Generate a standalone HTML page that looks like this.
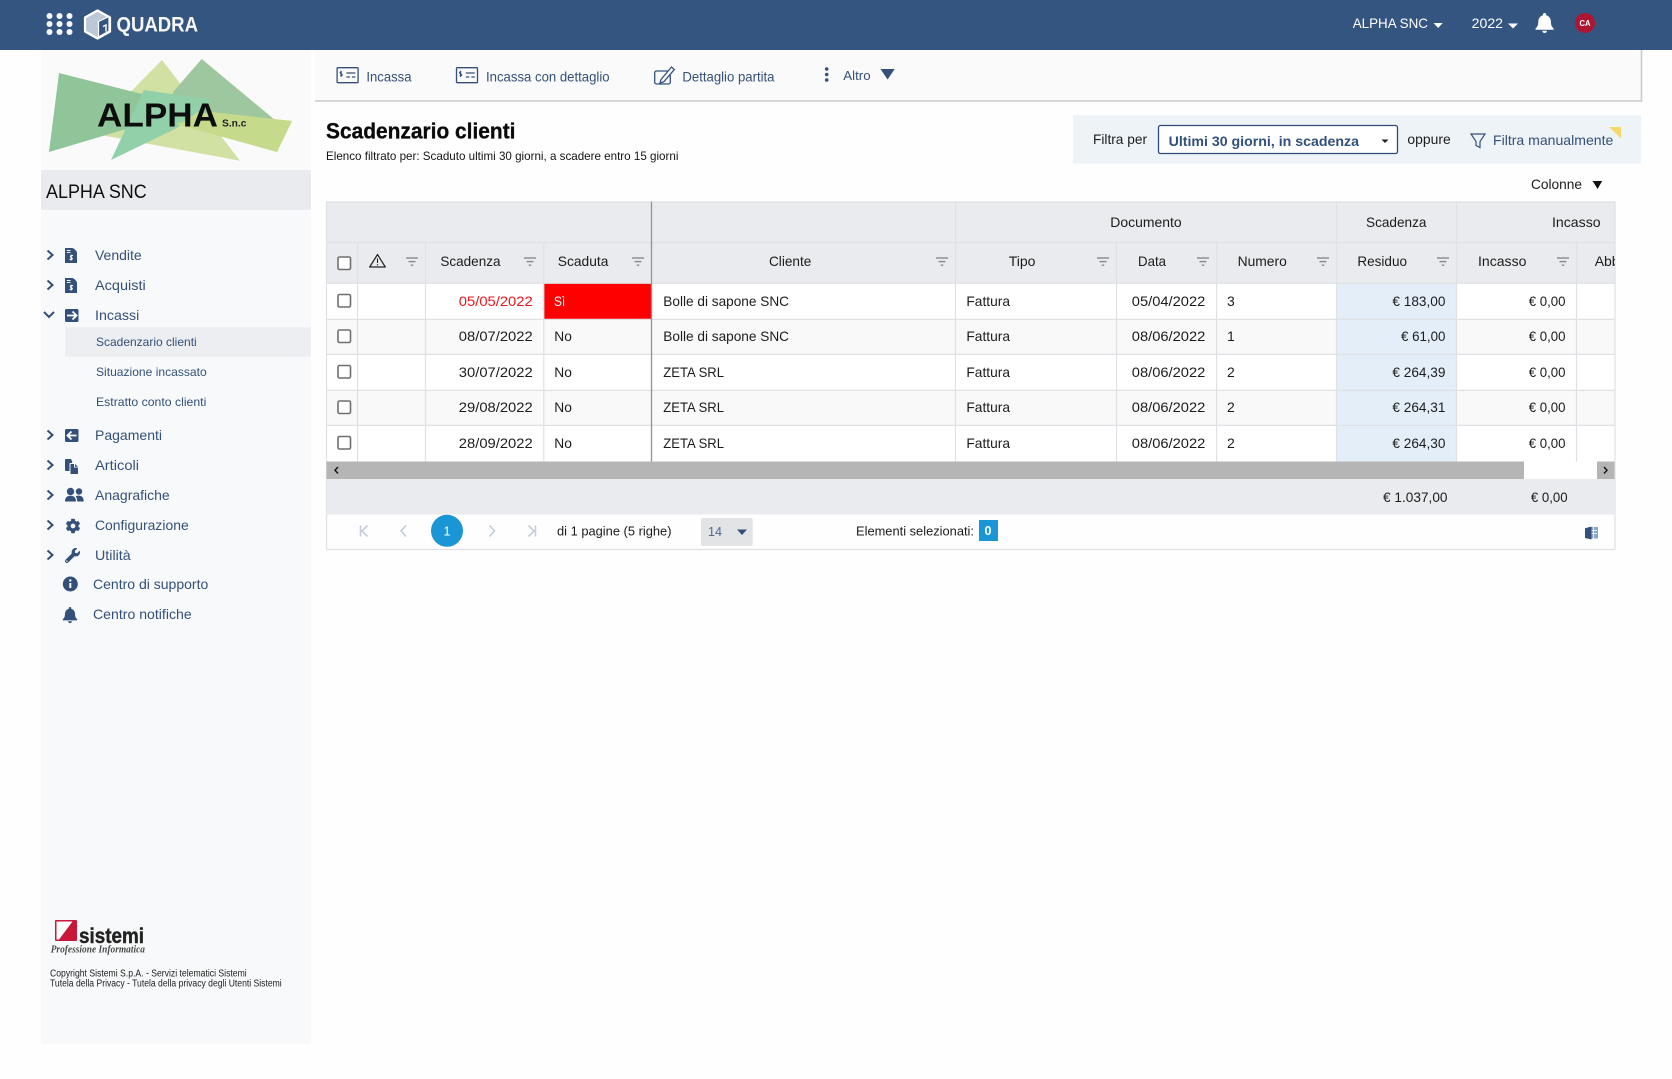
<!DOCTYPE html>
<html lang="it">
<head>
<meta charset="utf-8">
<title>Scadenzario clienti</title>
<style>
html,body{margin:0;padding:0;background:#fefefe;width:1672px;height:1079px;overflow:hidden}
svg{display:block}
text{font-family:"Liberation Sans",sans-serif;font-size:14px;fill:#1c1c1c}
.n text,text.n{fill:#34507a}
.s{font-size:12px}
.b{font-weight:bold}
.w{fill:#fff}
.g line{stroke:#dfe1e4;stroke-width:1.2}
.cb{fill:#fff;stroke:#6f6f6f;stroke-width:1.6}
</style>
</head>
<body>
<svg width="1672" height="1079" viewBox="0 0 1672 1079" xmlns="http://www.w3.org/2000/svg">
<defs>
<g id="f"><path d="M0 0H12" stroke="#85898e" stroke-width="1.4"/><path d="M2.5 3.6H9.5" stroke="#85898e" stroke-width="1.4"/><path d="M4.8 7.2H7.2" stroke="#85898e" stroke-width="1.4"/></g>
<g id="bill"><rect x=".7" y=".7" width="21" height="15" rx="1" fill="none" stroke="#34507a" stroke-width="1.3"/><path d="M5.5 5c-1.8-.8-2.6 1.4-.8 1.8 2.2.5 1.2 2.8-.9 1.8M4.7 3.800v6.200" fill="none" stroke="#34507a" stroke-width="1"/><path d="M10 6H19M10 10H13.500M15.500 10H19" stroke="#34507a" stroke-width="1.3"/></g>
<g id="chev"><path d="M0 0L5 4.500L0 9" fill="none" stroke="#34507a" stroke-width="2"/></g>
<g id="doc"><path d="M0 0H7.500L12 4.500V15H0Z" fill="#34507a"/><path d="M8.300 0L12 3.700H8.300Z" fill="#34507a"/><path d="M1.800 2.500H5.500M1.800 4.600H5.500" stroke="#fff" stroke-width=".9"/><path d="M8 7.800c-1.900-1-3.800.7-1.900 1.700 2.300 1 .9 2.800-1.500 1.700M6.200 6.800v5.700" fill="none" stroke="#fff" stroke-width="1.100"/></g>
</defs>

<rect width="1672" height="1079" fill="#fefefe"/>

<!-- Top bar -->
<rect width="1672" height="50" fill="#355581"/>
<g fill="#f4f6f9">
<circle cx="49.500" cy="16" r="3"/><circle cx="59.500" cy="16" r="3"/><circle cx="69.500" cy="16" r="3"/>
<circle cx="49.500" cy="24" r="3"/><circle cx="59.500" cy="24" r="3"/><circle cx="69.500" cy="24" r="3"/>
<circle cx="49.500" cy="32" r="3"/><circle cx="59.500" cy="32" r="3"/><circle cx="69.500" cy="32" r="3"/>
</g>
<path d="M97.500 10.500L110 17.500V31.500L97.500 38.500L85 31.500V17.500Z" fill="#bcc7d8" stroke="#fff" stroke-width="2.200" stroke-linejoin="round"/>
<path d="M98.500 21.500L109 16.500V31L98.500 37Z" fill="#355581" stroke="#fff" stroke-width="1.200"/>
<path d="M103 26.500L106 25V31.500" fill="none" stroke="#fff" stroke-width="1.400"/>
<text x="116.500" y="31.500" class="w" style="font-size:21px;font-weight:bold;opacity:.96" textLength="81.500" lengthAdjust="spacingAndGlyphs">QUADRA</text>
<text x="1352.700" y="28" class="w" textLength="75.300" lengthAdjust="spacingAndGlyphs">ALPHA SNC</text>
<path d="M1433.600 23H1442.700L1438.100 28Z" fill="#fff"/>
<text x="1471.700" y="28" class="w" textLength="31.300" lengthAdjust="spacingAndGlyphs">2022</text>
<path d="M1508 23.500H1518L1513 28.500Z" fill="#fff"/>
<path transform="translate(1535.600 13)" fill="#fff" d="M9 0a1.600 1.600 0 0 1 1.600 1.600v.7c3 .8 4.700 3.400 4.700 6.500 0 4 1.200 5.200 2.700 6.600v1.300H0v-1.300c1.500-1.400 2.700-2.600 2.700-6.600 0-3.100 1.700-5.700 4.700-6.500v-.7A1.600 1.600 0 0 1 9 0zM6.700 17.800h4.600a2.300 2.300 0 0 1-4.600 0z"/>
<circle cx="1585" cy="23" r="10" fill="#ad1632"/>
<text x="1579.500" y="26" class="w b" style="font-size:8px" textLength="11" lengthAdjust="spacingAndGlyphs">CA</text>

<!-- Sidebar -->
<rect x="41" y="50" width="270" height="994" fill="#f8f9fa"/>
<rect x="41" y="50" width="270" height="120" fill="#fafafa"/>
<g>
<polygon points="162,60 240,160.700 90,133" fill="#d0e1a3"/>
<polygon points="201.700,59 275,120 172,120 173,92" fill="#9fc79f"/>
<polygon points="59,73 49,152 180,113 146,95" fill="#90c59a"/>
<polygon points="292,121 277,152 135,112 170,110" fill="#c9dc92"/>
<polygon points="144,90 111,160 177,128 213,100" fill="#92d0a9"/>
<polygon points="292,121 277,152 176,124 212,112" fill="#c6da8c"/>
</g>
<text x="97" y="126.500" class="b" style="font-size:33px;fill:#0d0d0d" textLength="121" lengthAdjust="spacingAndGlyphs">ALPHA</text>
<text x="222" y="126.500" class="b" style="font-size:10px;fill:#222" textLength="24.500" lengthAdjust="spacingAndGlyphs">S.n.c</text>
<rect x="41" y="170" width="270" height="40" fill="#e9ebee"/>
<text x="46" y="198" style="font-size:19px;fill:#0f0f0f" textLength="100.700" lengthAdjust="spacingAndGlyphs">ALPHA SNC</text>

<rect x="65" y="327.300" width="246" height="29.500" fill="#eceef1"/>

<use href="#chev" x="47.500" y="250.500"/><use href="#chev" x="47.500" y="280.500"/>
<path d="M44 312L49 317L54 312" fill="none" stroke="#34507a" stroke-width="2"/>
<use href="#chev" x="47.500" y="430.500"/><use href="#chev" x="47.500" y="460.500"/><use href="#chev" x="47.500" y="490.500"/><use href="#chev" x="47.500" y="520.500"/><use href="#chev" x="47.500" y="550.500"/>

<use href="#doc" x="65" y="248"/><use href="#doc" x="65" y="278"/>
<rect x="65" y="309" width="13.500" height="13" rx="1.500" fill="#34507a"/><path d="M67 315.500H76M72.500 311.500L76.500 315.500L72.500 319.500" fill="none" stroke="#fff" stroke-width="1.800"/>
<rect x="65" y="429" width="13.500" height="13" rx="1.500" fill="#34507a"/><path d="M76.500 435.500H67.500M71.500 431.500L67.500 435.500L71.500 439.500" fill="none" stroke="#fff" stroke-width="1.800"/>
<path d="M65 460a1 1 0 0 1 1-1h5l1.200 2.500V463H69.500v8H66a1 1 0 0 1-1-1z" fill="#34507a"/>
<path d="M70.500 464h3.500v3.500h4V474h-7.500zM75 464l3 2.700h-3z" fill="#34507a"/>
<g fill="#34507a"><circle cx="70.500" cy="491.500" r="3.700"/><circle cx="79" cy="491.500" r="3.200"/><path d="M65 501.500c0-4 2-5.800 5.500-5.800s5.500 1.800 5.500 5.800zM77.200 501.500c0-2.500-.5-4-1.500-5.300.9-.5 2-.6 3-.6 3 0 5 1.600 5 5.900z"/></g>
<path transform="translate(65.500 518.500) scale(.0293)" fill="#34507a" d="M487.400 315.700l-42.600-24.600c4.300-23.200 4.300-47 0-70.200l42.600-24.600c4.900-2.800 7.100-8.600 5.500-14-11.100-35.600-30-67.800-54.700-94.600-3.800-4.100-10-5.100-14.800-2.300L380.800 110c-17.900-15.400-38.500-27.300-60.800-35.100V25.800c0-5.600-3.900-10.500-9.400-11.700-36.700-8.200-74.300-7.800-109.200 0-5.500 1.200-9.400 6.100-9.400 11.700V75c-22.200 7.900-42.800 19.800-60.800 35.100L88.700 85.500c-4.900-2.800-11-1.900-14.800 2.300-24.700 26.700-43.600 58.900-54.700 94.600-1.700 5.400.6 11.200 5.500 14L67.300 221c-4.300 23.200-4.300 47 0 70.200l-42.600 24.600c-4.900 2.800-7.100 8.600-5.500 14 11.100 35.600 30 67.800 54.700 94.600 3.800 4.100 10 5.100 14.800 2.300l42.600-24.600c17.900 15.400 38.500 27.300 60.800 35.100v49.200c0 5.600 3.900 10.500 9.400 11.700 36.700 8.200 74.300 7.800 109.200 0 5.500-1.200 9.400-6.100 9.400-11.700v-49.200c22.200-7.900 42.800-19.800 60.800-35.100l42.600 24.600c4.900 2.800 11 1.900 14.800-2.300 24.700-26.700 43.600-58.900 54.700-94.600 1.500-5.500-.7-11.300-5.600-14.100zM256 336c-44.100 0-80-35.900-80-80s35.900-80 80-80 80 35.900 80 80-35.900 80-80 80z"/>
<path transform="translate(65 548) scale(.0293)" fill="#34507a" d="M507.730 109.100c-2.240-9.030-13.540-12.090-20.120-5.510l-74.360 74.360-67.880-11.310-11.310-67.880 74.360-74.360c6.620-6.620 3.430-17.900-5.660-20.160-47.380-11.740-99.550.91-136.580 37.930-39.640 39.640-50.550 97.100-34.050 147.200L18.740 402.760c-24.990 24.990-24.990 65.510 0 90.500 24.990 24.990 65.510 24.990 90.500 0l213.210-213.210c50.120 16.710 107.470 5.680 147.370-34.220 37.070-37.070 49.700-89.320 37.910-136.730zM64 472c-13.250 0-24-10.750-24-24 0-13.260 10.750-24 24-24s24 10.740 24 24c0 13.250-10.750 24-24 24z"/>
<circle cx="70.300" cy="584" r="7.500" fill="#34507a"/><rect x="69.300" y="583" width="2" height="5" fill="#fff"/><circle cx="70.300" cy="580.500" r="1.200" fill="#fff"/>
<path transform="translate(62.800 607) scale(.8)" fill="#34507a" d="M9 0a1.600 1.600 0 0 1 1.600 1.600v.7c3 .8 4.700 3.400 4.700 6.500 0 4 1.200 5.200 2.700 6.600v1.300H0v-1.300c1.500-1.400 2.700-2.600 2.700-6.600 0-3.100 1.700-5.700 4.700-6.500v-.7A1.600 1.600 0 0 1 9 0zM6.700 17.800h4.600a2.300 2.300 0 0 1-4.600 0z"/>

<g class="n">
<text x="95" y="260" textLength="46.700" lengthAdjust="spacingAndGlyphs">Vendite</text>
<text x="95" y="290" textLength="50.700" lengthAdjust="spacingAndGlyphs">Acquisti</text>
<text x="95" y="320" textLength="44.300" lengthAdjust="spacingAndGlyphs">Incassi</text>
<text x="96" y="346" class="s" textLength="100.700" lengthAdjust="spacingAndGlyphs">Scadenzario clienti</text>
<text x="96" y="376" class="s" textLength="110.700" lengthAdjust="spacingAndGlyphs">Situazione incassato</text>
<text x="96" y="406" class="s" textLength="110.300" lengthAdjust="spacingAndGlyphs">Estratto conto clienti</text>
<text x="95" y="440" textLength="67" lengthAdjust="spacingAndGlyphs">Pagamenti</text>
<text x="95" y="470" textLength="44" lengthAdjust="spacingAndGlyphs">Articoli</text>
<text x="95" y="500" textLength="74.700" lengthAdjust="spacingAndGlyphs">Anagrafiche</text>
<text x="95" y="530" textLength="93.700" lengthAdjust="spacingAndGlyphs">Configurazione</text>
<text x="95" y="560" textLength="35.700" lengthAdjust="spacingAndGlyphs">Utilità</text>
<text x="93" y="589" textLength="115.300" lengthAdjust="spacingAndGlyphs">Centro di supporto</text>
<text x="93" y="619" textLength="98.700" lengthAdjust="spacingAndGlyphs">Centro notifiche</text>
</g>

<!-- Sistemi logo -->
<rect x="55" y="920" width="22" height="21" rx="1" fill="#c8183a"/>
<path d="M56.500 921.500H72.500L59 939.500H56.500Z" fill="#fff"/>
<text x="79" y="943" class="b" style="font-size:21px;fill:#222;stroke:#222;stroke-width:.4" textLength="65" lengthAdjust="spacingAndGlyphs">sistemi</text>
<text x="50.700" y="952.500" style="font-family:'Liberation Serif',serif;font-size:10.500px;font-style:italic;font-weight:bold;fill:#4a4a4a" textLength="94.300" lengthAdjust="spacingAndGlyphs">Professione Informatica</text>
<text x="50" y="976.500" style="font-size:10px;fill:#1c1c1c" textLength="196.700" lengthAdjust="spacingAndGlyphs">Copyright Sistemi S.p.A. - Servizi telematici Sistemi</text>
<text x="50" y="986.500" style="font-size:10px;fill:#1c1c1c" textLength="231.700" lengthAdjust="spacingAndGlyphs">Tutela della Privacy - Tutela della privacy degli Utenti Sistemi</text>

<!-- Toolbar -->
<rect x="315" y="50" width="1326" height="51" fill="#fafafa"/>
<path d="M315 101H1641.500V50" fill="none" stroke="#c9cacc" stroke-width="1.600"/>
<use href="#bill" x="336.400" y="67"/>
<text class="n" x="366.400" y="81.500" textLength="45.100" lengthAdjust="spacingAndGlyphs">Incassa</text>
<use href="#bill" x="455.800" y="67"/>
<text class="n" x="486" y="81.500" textLength="123.600" lengthAdjust="spacingAndGlyphs">Incassa con dettaglio</text>
<path d="M668 71H656.500a1.800 1.800 0 0 0-1.800 1.800V82.200a1.800 1.800 0 0 0 1.800 1.800H668.500a1.800 1.800 0 0 0 1.800-1.800V75" fill="none" stroke="#34507a" stroke-width="1.300"/>
<path d="M661 79.500L671.500 67L674.300 69.500L663.800 81.800L660 83Z" fill="#fafafa" stroke="#34507a" stroke-width="1.300"/>
<text class="n" x="682.400" y="81.500" textLength="92.100" lengthAdjust="spacingAndGlyphs">Dettaglio partita</text>
<g fill="#34507a"><circle cx="826.700" cy="69" r="1.800"/><circle cx="826.700" cy="74.500" r="1.800"/><circle cx="826.700" cy="80" r="1.800"/></g>
<text class="n" x="843.300" y="80" style="font-size:13px" textLength="27.300" lengthAdjust="spacingAndGlyphs">Altro</text>
<path d="M880.500 69H894.700L887.600 79.500Z" fill="#34507a"/>

<!-- Title -->
<text x="326" y="138.500" class="b" style="font-size:22px;fill:#0a0a0a;stroke:#0a0a0a;stroke-width:.3" textLength="189.500" lengthAdjust="spacingAndGlyphs">Scadenzario clienti</text>
<text x="326" y="160" style="font-size:12px;fill:#141414" textLength="352.400" lengthAdjust="spacingAndGlyphs">Elenco filtrato per: Scaduto ultimi 30 giorni, a scadere entro 15 giorni</text>

<!-- Filter -->
<rect x="1073" y="115" width="568" height="48.500" fill="#eef3f8"/>
<text x="1093" y="144" textLength="54" lengthAdjust="spacingAndGlyphs">Filtra per</text>
<rect x="1158.500" y="125.500" width="239" height="28" rx="2" fill="#fff" stroke="#2f4b77" stroke-width="1.300"/>
<text x="1168.600" y="146" class="b" style="fill:#2f4f7e" textLength="190.400" lengthAdjust="spacingAndGlyphs">Ultimi 30 giorni, in scadenza</text>
<path d="M1381.500 139.500H1388.500L1385 143Z" fill="#222"/>
<text x="1407.400" y="144" textLength="43.300" lengthAdjust="spacingAndGlyphs">oppure</text>
<path d="M1471 134H1485L1480 141.500V147.500L1476 145.500V141.500Z" fill="none" stroke="#34507a" stroke-width="1.200"/>
<text class="n" x="1493" y="145" textLength="120.300" lengthAdjust="spacingAndGlyphs">Filtra manualmente</text>
<path d="M1609 127H1621V138.500Z" fill="#f5d96b"/>
<text x="1531" y="189" textLength="51" lengthAdjust="spacingAndGlyphs">Colonne</text>
<path d="M1592.700 181H1602.200L1597.500 189Z" fill="#111"/>

<!-- Table -->
<rect x="326.500" y="201.500" width="1288.500" height="81.500" fill="#e9ebee"/>
<rect x="326.500" y="283.500" width="1288.500" height="178" fill="#fff"/>
<rect x="326.500" y="319.500" width="1288.500" height="35" fill="#f9f9f9"/>
<rect x="326.500" y="390.500" width="1288.500" height="35" fill="#f9f9f9"/>
<rect x="1336.500" y="283.500" width="120" height="178" fill="#e3eef8"/>
<rect x="544" y="283.500" width="107.500" height="35.500" fill="#fe0000"/>
<g class="g">
<line x1="326.500" y1="202" x2="1615" y2="202"/>
<line x1="326.500" y1="242.500" x2="1615" y2="242.500"/>
<line x1="326.500" y1="283.300" x2="1615" y2="283.300"/>
<line x1="326.500" y1="319.400" x2="1615" y2="319.400"/>
<line x1="326.500" y1="354.400" x2="1615" y2="354.400"/>
<line x1="326.500" y1="390.400" x2="1615" y2="390.400"/>
<line x1="326.500" y1="425.400" x2="1615" y2="425.400"/>
<line x1="326.500" y1="201.500" x2="326.500" y2="549.500"/>
<line x1="1615" y1="201.500" x2="1615" y2="549.500"/>
<line x1="357.500" y1="242.500" x2="357.500" y2="461.500"/>
<line x1="425.500" y1="242.500" x2="425.500" y2="461.500"/>
<line x1="543.800" y1="242.500" x2="543.800" y2="461.500"/>
<line x1="955.500" y1="201.500" x2="955.500" y2="461.500"/>
<line x1="1116.500" y1="242.500" x2="1116.500" y2="461.500"/>
<line x1="1216.600" y1="242.500" x2="1216.600" y2="461.500"/>
<line x1="1336.500" y1="201.500" x2="1336.500" y2="461.500"/>
<line x1="1456.500" y1="201.500" x2="1456.500" y2="461.500"/>
<line x1="1576.500" y1="242.500" x2="1576.500" y2="461.500"/>
</g>
<line x1="651.500" y1="201.500" x2="651.500" y2="461.500" stroke="#909294" stroke-width="1.300"/>

<!-- Group headers -->
<text x="1110.300" y="227" textLength="71.400" lengthAdjust="spacingAndGlyphs">Documento</text>
<text x="1366" y="227" textLength="60.500" lengthAdjust="spacingAndGlyphs">Scadenza</text>
<text x="1552" y="227" textLength="48.600" lengthAdjust="spacingAndGlyphs">Incasso</text>

<!-- Column headers -->
<rect x="338" y="257" width="12.500" height="12.500" rx="1.500" class="cb"/>
<path d="M377.500 254.500L385.300 267H369.700Z" fill="none" stroke="#222" stroke-width="1.200" stroke-linejoin="round"/>
<path d="M377.500 258.500V263M377.500 264.300V265.500" stroke="#222" stroke-width="1.100"/>
<use href="#f" x="406" y="258"/>
<text x="440.400" y="266" textLength="60.100" lengthAdjust="spacingAndGlyphs">Scadenza</text>
<use href="#f" x="524" y="258"/>
<text x="557.800" y="266" textLength="50.600" lengthAdjust="spacingAndGlyphs">Scaduta</text>
<use href="#f" x="632" y="258"/>
<text x="769" y="266" textLength="42.300" lengthAdjust="spacingAndGlyphs">Cliente</text>
<use href="#f" x="936" y="258"/>
<text x="1008.700" y="266" textLength="26.700" lengthAdjust="spacingAndGlyphs">Tipo</text>
<use href="#f" x="1097" y="258"/>
<text x="1138" y="266" textLength="28" lengthAdjust="spacingAndGlyphs">Data</text>
<use href="#f" x="1197" y="258"/>
<text x="1237.600" y="266" textLength="49.200" lengthAdjust="spacingAndGlyphs">Numero</text>
<use href="#f" x="1317" y="258"/>
<text x="1357.400" y="266" textLength="49.600" lengthAdjust="spacingAndGlyphs">Residuo</text>
<use href="#f" x="1437" y="258"/>
<text x="1478" y="266" textLength="48.400" lengthAdjust="spacingAndGlyphs">Incasso</text>
<use href="#f" x="1557" y="258"/>
<svg x="1576.500" y="250" width="38.500" height="24"><text x="18.200" y="16">Abb</text></svg>

<!-- Rows -->
<g>
<rect x="338" y="294.500" width="12.500" height="12.500" rx="1.500" class="cb"/>
<rect x="338" y="330" width="12.500" height="12.500" rx="1.500" class="cb"/>
<rect x="338" y="365.500" width="12.500" height="12.500" rx="1.500" class="cb"/>
<rect x="338" y="401" width="12.500" height="12.500" rx="1.500" class="cb"/>
<rect x="338" y="436.500" width="12.500" height="12.500" rx="1.500" class="cb"/>
</g>
<text x="458.800" y="306" style="fill:#e8181c" textLength="73.900" lengthAdjust="spacingAndGlyphs">05/05/2022</text>
<text x="458.800" y="341" textLength="73.900" lengthAdjust="spacingAndGlyphs">08/07/2022</text>
<text x="458.800" y="377" textLength="73.900" lengthAdjust="spacingAndGlyphs">30/07/2022</text>
<text x="458.800" y="412" textLength="73.900" lengthAdjust="spacingAndGlyphs">29/08/2022</text>
<text x="458.800" y="448" textLength="73.900" lengthAdjust="spacingAndGlyphs">28/09/2022</text>

<text x="553.900" y="306" class="w" textLength="11.400" lengthAdjust="spacingAndGlyphs">Sì</text>
<text x="554.300" y="341" textLength="17.600" lengthAdjust="spacingAndGlyphs">No</text>
<text x="554.300" y="377" textLength="17.600" lengthAdjust="spacingAndGlyphs">No</text>
<text x="554.300" y="412" textLength="17.600" lengthAdjust="spacingAndGlyphs">No</text>
<text x="554.300" y="448" textLength="17.600" lengthAdjust="spacingAndGlyphs">No</text>

<text x="663.300" y="306" textLength="125.700" lengthAdjust="spacingAndGlyphs">Bolle di sapone SNC</text>
<text x="663.300" y="341" textLength="125.700" lengthAdjust="spacingAndGlyphs">Bolle di sapone SNC</text>
<text x="663.300" y="377" textLength="60.700" lengthAdjust="spacingAndGlyphs">ZETA SRL</text>
<text x="663.300" y="412" textLength="60.700" lengthAdjust="spacingAndGlyphs">ZETA SRL</text>
<text x="663.300" y="448" textLength="60.700" lengthAdjust="spacingAndGlyphs">ZETA SRL</text>

<text x="966.400" y="306" textLength="43.600" lengthAdjust="spacingAndGlyphs">Fattura</text>
<text x="966.400" y="341" textLength="43.600" lengthAdjust="spacingAndGlyphs">Fattura</text>
<text x="966.400" y="377" textLength="43.600" lengthAdjust="spacingAndGlyphs">Fattura</text>
<text x="966.400" y="412" textLength="43.600" lengthAdjust="spacingAndGlyphs">Fattura</text>
<text x="966.400" y="448" textLength="43.600" lengthAdjust="spacingAndGlyphs">Fattura</text>

<text x="1131.800" y="306" textLength="73.500" lengthAdjust="spacingAndGlyphs">05/04/2022</text>
<text x="1131.800" y="341" textLength="73.500" lengthAdjust="spacingAndGlyphs">08/06/2022</text>
<text x="1131.800" y="377" textLength="73.500" lengthAdjust="spacingAndGlyphs">08/06/2022</text>
<text x="1131.800" y="412" textLength="73.500" lengthAdjust="spacingAndGlyphs">08/06/2022</text>
<text x="1131.800" y="448" textLength="73.500" lengthAdjust="spacingAndGlyphs">08/06/2022</text>

<text x="1227" y="306">3</text>
<text x="1227" y="341">1</text>
<text x="1227" y="377">2</text>
<text x="1227" y="412">2</text>
<text x="1227" y="448">2</text>

<text x="1392.400" y="306" textLength="53" lengthAdjust="spacingAndGlyphs">€ 183,00</text>
<text x="1401" y="341" textLength="44.400" lengthAdjust="spacingAndGlyphs">€ 61,00</text>
<text x="1392.400" y="377" textLength="53" lengthAdjust="spacingAndGlyphs">€ 264,39</text>
<text x="1392.400" y="412" textLength="53" lengthAdjust="spacingAndGlyphs">€ 264,31</text>
<text x="1392.400" y="448" textLength="53" lengthAdjust="spacingAndGlyphs">€ 264,30</text>

<text x="1528.700" y="306" textLength="36.800" lengthAdjust="spacingAndGlyphs">€ 0,00</text>
<text x="1528.700" y="341" textLength="36.800" lengthAdjust="spacingAndGlyphs">€ 0,00</text>
<text x="1528.700" y="377" textLength="36.800" lengthAdjust="spacingAndGlyphs">€ 0,00</text>
<text x="1528.700" y="412" textLength="36.800" lengthAdjust="spacingAndGlyphs">€ 0,00</text>
<text x="1528.700" y="448" textLength="36.800" lengthAdjust="spacingAndGlyphs">€ 0,00</text>

<!-- Scrollbar -->
<rect x="326.500" y="461.500" width="1197.500" height="17.500" fill="#b5b5b5"/>
<rect x="1524" y="461.500" width="73" height="17.500" fill="#fff"/>
<rect x="1597" y="461.500" width="17.500" height="17.500" fill="#b5b5b5"/>
<path d="M338 467L335 470.300L338 473.500" fill="none" stroke="#111" stroke-width="1.400"/>
<path d="M1604 467L1607 470.300L1604 473.500" fill="none" stroke="#111" stroke-width="1.400"/>

<!-- Totals -->
<rect x="326.500" y="479" width="1288.500" height="35.500" fill="#e9ebee"/>
<text x="1383" y="502" textLength="64.500" lengthAdjust="spacingAndGlyphs">€ 1.037,00</text>
<text x="1530.900" y="502" textLength="36.700" lengthAdjust="spacingAndGlyphs">€ 0,00</text>

<!-- Pager -->
<line x1="326.500" y1="549.500" x2="1615" y2="549.500" stroke="#dfe1e4" stroke-width="1.200"/>
<path d="M360.500 525.500V536.500M367.500 525.500L362 531L367.500 536.500" fill="none" stroke="#c4ccd7" stroke-width="1.600"/>
<path d="M406 525.500L401 531L406 536.500" fill="none" stroke="#c4ccd7" stroke-width="1.600"/>
<circle cx="447" cy="530.800" r="16" fill="#1a95d6"/>
<text x="443.500" y="535.500" class="w" style="font-size:12.500px">1</text>
<path d="M489.500 525.500L494.500 531L489.500 536.500" fill="none" stroke="#c4ccd7" stroke-width="1.600"/>
<path d="M535.500 525.500V536.500M528.500 525.500L534 531L528.500 536.500" fill="none" stroke="#c4ccd7" stroke-width="1.600"/>
<text x="557" y="535.500" style="font-size:13px" textLength="114.500" lengthAdjust="spacingAndGlyphs">di 1 pagine (5 righe)</text>
<rect x="701" y="518" width="51.700" height="28" rx="2" fill="#e3e4e6"/>
<text x="708" y="536" style="font-size:13px;fill:#4f6a8d" textLength="14" lengthAdjust="spacingAndGlyphs">14</text>
<path d="M737 529.500H747L742 535Z" fill="#34507a"/>
<text x="856" y="535.500" style="font-size:13px" textLength="118" lengthAdjust="spacingAndGlyphs">Elementi selezionati:</text>
<rect x="979" y="520" width="19" height="21" fill="#1a95d6"/>
<text x="984.500" y="535" class="w b" style="font-size:12.500px">0</text>
<rect x="1589" y="527" width="9" height="11.500" fill="#8aa6c8"/>
<path d="M1590 530.500H1597M1590 533.500H1597M1593.500 527V538.500" stroke="#fff" stroke-width=".7"/>
<path d="M1585 528.300L1591.500 526.500V539.500L1585 538Z" fill="#34507a"/>
</svg>
</body>
</html>
